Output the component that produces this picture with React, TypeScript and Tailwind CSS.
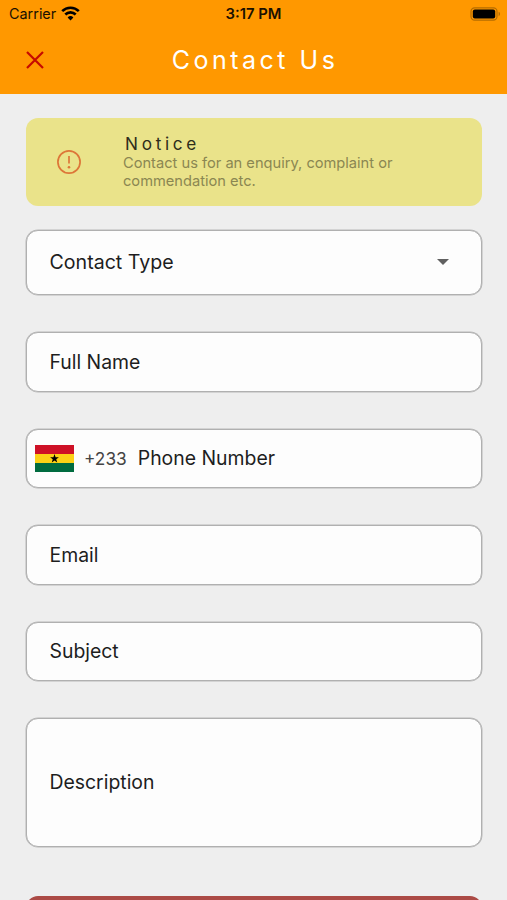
import clsx from 'clsx'

interface FieldProps {
  label: string
  className?: string
  children?: React.ReactNode
}

function Field({ label, className, children }: FieldProps) {
  return (
    <div
      className={clsx(
        'flex items-center rounded-xl border border-[#b0b0b0] bg-[#fdfdfd] text-[19.4px] text-[#1e1e1e] shadow-[0_0_0_0.5px_#b8b8b8]',
        className
      )}
    >
      {children}
      <span>{label}</span>
    </div>
  )
}

function WifiIcon() {
  return (
    <svg className="h-[15px] w-[19px]" viewBox="0 0 19 15" fill="none" stroke="#000" strokeWidth="2.6">
      <path d="M1.2 5.2a11.7 11.7 0 0 1 16.6 0" />
      <path d="M4.3 8.5a7.4 7.4 0 0 1 10.4 0" />
      <path d="M9.5 14.4 6.6 11.4a4.1 4.1 0 0 1 5.8 0z" fill="#000" stroke="none" />
    </svg>
  )
}

function BatteryIcon() {
  return (
    <svg className="h-[14px] w-[31px]" viewBox="0 0 31 14">
      <rect x="1" y="0.8" width="26" height="12.4" rx="3.6" fill="none" stroke="#b56c00" strokeWidth="1.2" />
      <rect x="2.8" y="2.6" width="22.4" height="8.8" rx="2" fill="#000" />
      <path d="M28.6 4.8a2.4 2.4 0 0 1 0 4.4z" fill="#b56c00" />
    </svg>
  )
}

function GhanaFlag() {
  return (
    <svg className="h-[27px] w-[39px] shrink-0" viewBox="0 0 40 27" preserveAspectRatio="none">
      <rect width="40" height="9" fill="#ce1126" />
      <rect y="9" width="40" height="9" fill="#fcd116" />
      <rect y="18" width="40" height="9" fill="#006b3f" />
      <path d="M20 9l1.1 3.3h3.4l-2.7 2 1 3.3-2.8-2-2.8 2 1-3.3-2.7-2h3.4z" fill="#000" />
    </svg>
  )
}

export default function App() {
  return (
    <div className="h-[900px] w-[507px] overflow-hidden bg-[#eeeeee] font-['Inter',sans-serif]">
      <header className="h-[94px] bg-[#ff9800]">
        {/* Status bar */}
        <div className="grid h-[27px] grid-cols-3 items-center pl-[9px] pr-[6px] text-[14.4px] text-[#1a1000]">
          <div className="flex items-center gap-[5px]">
            <span>Carrier</span>
            <WifiIcon />
          </div>
          <span className="pr-[3px] pt-px text-center text-[14.8px] font-semibold">3:17 PM</span>
          <div className="flex justify-end">
            <BatteryIcon />
          </div>
        </div>
        {/* Title bar */}
        <div className="grid h-[66px] grid-cols-[70px_1fr_70px] items-center">
          <button type="button" aria-label="Close" className="flex justify-center">
            <svg className="h-[18px] w-[18px]" viewBox="0 0 18 18" stroke="#c60a00" strokeWidth="2.2">
              <path d="M1 1l16 16M17 1L1 17" />
            </svg>
          </button>
          <h1 className="pl-[3px] pt-px text-center text-[25px] tracking-[3.5px] text-white">Contact Us</h1>
        </div>
      </header>

      <main className="flex flex-col pl-[25.5px] pr-[25px]">
        <section className="mt-6 flex h-[88px] items-center rounded-xl bg-[#eae38a]">
          <svg className="ml-[31.5px] h-6 w-6" viewBox="0 0 24 24" fill="none" stroke="#dd7638" strokeWidth="1.7">
            <circle cx="12" cy="12" r="11.1" />
            <path d="M12 6v7.5" />
            <circle cx="12" cy="17.2" r="1.3" fill="#dd7638" stroke="none" />
          </svg>
          <div className="ml-[42px] pt-px">
            <h2 className="pl-0.5 text-[17.2px] leading-[18px] tracking-[3.7px] text-[#2f2d1b]">Notice</h2>
            <p className="w-[290px] pt-px text-[14.65px] leading-[18px] text-[#8b8752]">
              Contact us for an enquiry, complaint or commendation etc.
            </p>
          </div>
        </section>

        <div className="mt-[23.5px] flex h-[65px] items-center justify-between rounded-xl border border-[#b0b0b0] bg-[#fdfdfd] pl-[23px] pr-8 text-[19.6px] text-[#1e1e1e] shadow-[0_0_0_0.5px_#b8b8b8]">
          <span className="pt-px">Contact Type</span>
          <svg className="h-1.5 w-3" viewBox="0 0 12 6">
            <path d="M0 0h12L6 6z" fill="#606060" />
          </svg>
        </div>

        <div className="mt-[37.5px] flex flex-col gap-[37px]">
          <Field label="Full Name" className="h-[59.5px] pl-[23px] pt-px" />
          <Field label="Phone Number" className="h-[59.5px] pl-[8.5px]">
            <GhanaFlag />
            <span className="ml-[10px] mr-[11px] pt-0.5 text-[17.3px] text-[#444444]">+233</span>
          </Field>
          <Field label="Email" className="h-[59.5px] pl-[23px] pt-px" />
          <Field label="Subject" className="h-[59.5px] pl-[23px]" />
          <Field label="Description" className="h-[129px] pl-[23px]" />
        </div>

        <button type="button" aria-label="Submit" className="mt-[49px] h-[60px] shrink-0 rounded-xl bg-[#ab4a45]" />
      </main>
    </div>
  )
}
